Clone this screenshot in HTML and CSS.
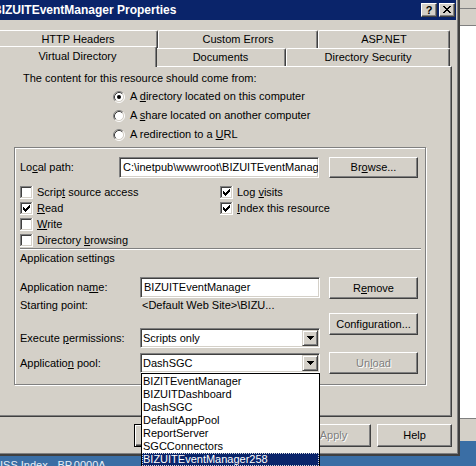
FILE: index.html
```html
<!DOCTYPE html>
<html>
<head>
<meta charset="utf-8">
<title>BIZUITEventManager Properties</title>
<link rel="stylesheet" href="styles.css">
</head>
<body>
<div class="screen">
  <div class="main">
    <div class="window">
      <div class="titlebar">
        <span class="title">BIZUITEventManager Properties</span>
        <span class="capbtn help">?</span>
        <span class="capbtn close">
          <svg width="8" height="7" viewBox="0 0 8 7" shape-rendering="crispEdges">
            <path d="M0 0h2v1H0zM6 0h2v1H6zM1 1h2v1H1zM5 1h2v1H5zM2 2h4v1H2zM3 3h2v1H3zM2 4h4v1H2zM1 5h2v1H1zM5 5h2v1H5zM0 6h2v1H0zM6 6h2v1H6z" fill="#000"/>
          </svg>
        </span>
      </div>
      <div class="sheet">
        <div class="tabrow back">
          <div class="tab t-http">HTTP Headers</div>
          <div class="tab t-custom">Custom Errors</div>
          <div class="tab t-asp">ASP.NET</div>
        </div>
        <div class="tabrow front">
          <div class="tab sel t-vdir">Virtual Directory</div>
          <div class="tab t-docs">Documents</div>
          <div class="tab t-dirsec">Directory Security</div>
        </div>
        <div class="panel">
          <div class="intro">The content for this resource should come from:</div>
          <div class="radios">
            <div class="radio-row">
              <svg class="radio" width="12" height="12" viewBox="0 0 12 12">
                <circle cx="6" cy="6" r="4.5" fill="#fff"/>
                <path d="M2.11 9.89A5.5 5.5 0 0 1 9.89 2.11" fill="none" stroke="#808080"/>
                <path d="M9.89 2.11A5.5 5.5 0 0 1 2.11 9.89" fill="none" stroke="#fff"/>
                <path d="M2.82 9.18A4.5 4.5 0 0 1 9.18 2.82" fill="none" stroke="#404040"/>
                <path d="M9.18 2.82A4.5 4.5 0 0 1 2.82 9.18" fill="none" stroke="#d4d0c8"/>
                <circle cx="6" cy="6" r="2" fill="#000"/>
              </svg>
              <span>A <u>d</u>irectory located on this computer</span>
            </div>
            <div class="radio-row">
              <svg class="radio" width="12" height="12" viewBox="0 0 12 12">
                <circle cx="6" cy="6" r="4.5" fill="#fff"/>
                <path d="M2.11 9.89A5.5 5.5 0 0 1 9.89 2.11" fill="none" stroke="#808080"/>
                <path d="M9.89 2.11A5.5 5.5 0 0 1 2.11 9.89" fill="none" stroke="#fff"/>
                <path d="M2.82 9.18A4.5 4.5 0 0 1 9.18 2.82" fill="none" stroke="#404040"/>
                <path d="M9.18 2.82A4.5 4.5 0 0 1 2.82 9.18" fill="none" stroke="#d4d0c8"/>
              </svg>
              <span>A <u>s</u>hare located on another computer</span>
            </div>
            <div class="radio-row">
              <svg class="radio" width="12" height="12" viewBox="0 0 12 12">
                <circle cx="6" cy="6" r="4.5" fill="#fff"/>
                <path d="M2.11 9.89A5.5 5.5 0 0 1 9.89 2.11" fill="none" stroke="#808080"/>
                <path d="M9.89 2.11A5.5 5.5 0 0 1 2.11 9.89" fill="none" stroke="#fff"/>
                <path d="M2.82 9.18A4.5 4.5 0 0 1 9.18 2.82" fill="none" stroke="#404040"/>
                <path d="M9.18 2.82A4.5 4.5 0 0 1 2.82 9.18" fill="none" stroke="#d4d0c8"/>
              </svg>
              <span>A redirection to a <u>U</u>RL</span>
            </div>
          </div>

          <div class="group">
            <div class="path-row">
              <span class="lbl-path">Lo<u>c</u>al path:</span>
              <div class="textbox tb-path">C:\inetpub\wwwroot\BIZUITEventManager</div>
              <div class="btn gbtn b-browse">Br<u>o</u>wse...</div>
            </div>

            <div class="checks">
              <div class="check-col left">
                <div class="check">
                  <svg class="cb" width="13" height="13" viewBox="0 0 13 13" shape-rendering="crispEdges"><rect width="13" height="13" fill="#fff"/><path d="M0 0h12v1H1v11H0z" fill="#808080"/><path d="M1 1h10v1H2v9H1z" fill="#404040"/><path d="M11 1h1v11H1v-1h10z" fill="#d4d0c8"/></svg>
                  <span>Scrip<u>t</u> source access</span>
                </div>
                <div class="check">
                  <svg class="cb" width="13" height="13" viewBox="0 0 13 13" shape-rendering="crispEdges"><rect width="13" height="13" fill="#fff"/><path d="M0 0h12v1H1v11H0z" fill="#808080"/><path d="M1 1h10v1H2v9H1z" fill="#404040"/><path d="M11 1h1v11H1v-1h10z" fill="#d4d0c8"/><path d="M3 5h1v3H3zM4 6h1v3H4zM5 7h1v3H5zM6 6h1v3H6zM7 5h1v3H7zM8 4h1v3H8zM9 3h1v3H9z" fill="#000"/></svg>
                  <span><u>R</u>ead</span>
                </div>
                <div class="check">
                  <svg class="cb" width="13" height="13" viewBox="0 0 13 13" shape-rendering="crispEdges"><rect width="13" height="13" fill="#fff"/><path d="M0 0h12v1H1v11H0z" fill="#808080"/><path d="M1 1h10v1H2v9H1z" fill="#404040"/><path d="M11 1h1v11H1v-1h10z" fill="#d4d0c8"/></svg>
                  <span><u>W</u>rite</span>
                </div>
                <div class="check">
                  <svg class="cb" width="13" height="13" viewBox="0 0 13 13" shape-rendering="crispEdges"><rect width="13" height="13" fill="#fff"/><path d="M0 0h12v1H1v11H0z" fill="#808080"/><path d="M1 1h10v1H2v9H1z" fill="#404040"/><path d="M11 1h1v11H1v-1h10z" fill="#d4d0c8"/></svg>
                  <span>Directory <u>b</u>rowsing</span>
                </div>
              </div>
              <div class="check-col right">
                <div class="check">
                  <svg class="cb" width="13" height="13" viewBox="0 0 13 13" shape-rendering="crispEdges"><rect width="13" height="13" fill="#fff"/><path d="M0 0h12v1H1v11H0z" fill="#808080"/><path d="M1 1h10v1H2v9H1z" fill="#404040"/><path d="M11 1h1v11H1v-1h10z" fill="#d4d0c8"/><path d="M3 5h1v3H3zM4 6h1v3H4zM5 7h1v3H5zM6 6h1v3H6zM7 5h1v3H7zM8 4h1v3H8zM9 3h1v3H9z" fill="#000"/></svg>
                  <span>Log <u>v</u>isits</span>
                </div>
                <div class="check">
                  <svg class="cb" width="13" height="13" viewBox="0 0 13 13" shape-rendering="crispEdges"><rect width="13" height="13" fill="#fff"/><path d="M0 0h12v1H1v11H0z" fill="#808080"/><path d="M1 1h10v1H2v9H1z" fill="#404040"/><path d="M11 1h1v11H1v-1h10z" fill="#d4d0c8"/><path d="M3 5h1v3H3zM4 6h1v3H4zM5 7h1v3H5zM6 6h1v3H6zM7 5h1v3H7zM8 4h1v3H8zM9 3h1v3H9z" fill="#000"/></svg>
                  <span><u>I</u>ndex this resource</span>
                </div>
              </div>
            </div>

            <div class="sep"></div>
            <div class="section">Application settings</div>

            <div class="app">
              <div class="app-left">
                <div class="field-row r-name">
                  <span class="lbl2">Application na<u>m</u>e:</span>
                  <div class="textbox tb-app">BIZUITEventManager</div>
                </div>
                <div class="field-row r-start">
                  <span class="lbl2">Starting point:</span>
                  <span class="value">&lt;Default Web Site&gt;\BIZU...</span>
                </div>
                <div class="field-row r-exec">
                  <span class="lbl2">Execute <u>p</u>ermissions:</span>
                  <div class="select">
                    <span class="sel-text">Scripts only</span>
                    <span class="arrow"><svg width="7" height="4" viewBox="0 0 7 4" shape-rendering="crispEdges"><path d="M0 0h7v1H0zM1 1h5v1H1zM2 2h3v1H2zM3 3h1v1H3z" fill="#000"/></svg></span>
                  </div>
                </div>
                <div class="field-row r-pool">
                  <span class="lbl2">Applicatio<u>n</u> pool:</span>
                  <div class="select">
                    <span class="sel-text">DashSGC</span>
                    <span class="arrow"><svg width="7" height="4" viewBox="0 0 7 4" shape-rendering="crispEdges"><path d="M0 0h7v1H0zM1 1h5v1H1zM2 2h3v1H2zM3 3h1v1H3z" fill="#000"/></svg></span>
                    <div class="droplist">
                      <div class="item">BIZITEventManager</div>
                      <div class="item">BIZUITDashboard</div>
                      <div class="item">DashSGC</div>
                      <div class="item">DefaultAppPool</div>
                      <div class="item">ReportServer</div>
                      <div class="item">SGCConnectors</div>
                      <div class="item hl">BIZUITEventManager258</div>
                    </div>
                  </div>
                </div>
              </div>
              <div class="app-right">
                <div class="btn gbtn b-remove">R<u>e</u>move</div>
                <div class="btn gbtn b-config">Confi<u>g</u>uration...</div>
                <div class="btn gbtn b-unload disabled">Un<u>l</u>oad</div>
              </div>
            </div>
          </div>
        </div>
        <div class="dlg-buttons">
          <div class="btn dbtn default">OK</div>
          <div class="btn dbtn">Cancel</div>
          <div class="btn dbtn disabled">Apply</div>
          <div class="btn dbtn">Help</div>
        </div>
      </div>
    </div>
    <div class="side">
      <div class="s-top"></div>
      <div class="s-line"></div>
      <div class="s-band"></div>
      <div class="s-line"></div>
      <div class="s-white"></div>
      <div class="s-line"></div>
      <div class="s-band2"></div>
      <div class="s-blue"></div>
    </div>
  </div>
  <div class="bottom"><span class="bottom-text">ISS.Index - BP.0000A</span></div>
</div>
</body>
</html>
```

FILE: styles.css
```css
* { box-sizing: border-box; }

html, body {
  margin: 0;
  padding: 0;
}

body {
  width: 476px;
  height: 466px;
  overflow: hidden;
  font-family: "Liberation Sans", Arial, sans-serif;
  font-size: 11px;
  line-height: 13px;
  color: #000;
  background: #d4d0c8;
}

u { text-decoration: underline; text-underline-offset: 1px; }

.screen {
  width: 476px;
  height: 466px;
  overflow: hidden;
  display: flex;
  flex-direction: column;
}

.main {
  display: flex;
  height: 456px;
  flex: none;
}

/* ---------- window ---------- */
.window {
  flex: none;
  width: 472px;
  height: 460px;
  margin: -4px 0 0 -12px;
  background: #d4d0c8;
  border: 2px solid;
  border-color: #d4d0c8 #404040 #404040 #d4d0c8;
  box-shadow: inset 1px 1px #fff, inset -1px -1px #808080;
  padding: 2px;
  display: flex;
  flex-direction: column;
}

.titlebar {
  flex: none;
  height: 20px;
  background: #0a246a;
  color: #fff;
  display: flex;
  align-items: flex-start;
  padding: 3px 1px 0 1px;
}

.title {
  flex: 1;
  font-weight: bold;
  font-size: 12px;
  line-height: 14px;
  white-space: nowrap;
  overflow: hidden;
}

.capbtn {
  flex: none;
  width: 16px;
  height: 14px;
  background: #d4d0c8;
  color: #000;
  border: 1px solid;
  border-color: #fff #404040 #404040 #fff;
  box-shadow: inset -1px -1px #808080;
  display: flex;
  align-items: center;
  justify-content: center;
  font-weight: bold;
  font-size: 11px;
  line-height: 11px;
}

.help { margin-right: 2px; }
.close svg { display: block; margin-top: -1px; }

/* ---------- property sheet ---------- */
.sheet {
  margin: 10px 4px 0 6px;
  display: flex;
  flex-direction: column;
}

.tabrow {
  display: flex;
  height: 18px;
  flex: none;
}

.tabrow.front { padding-left: 2px; }

.tab {
  flex: none;
  height: 18px;
  background: #d4d0c8;
  border-top: 1px solid #fff;
  border-left: 1px solid #fff;
  border-right: 1px solid #404040;
  box-shadow: inset -1px 0 #808080;
  border-radius: 2px 2px 0 0;
  text-align: center;
  line-height: 17px;
  white-space: nowrap;
}

.t-http { width: 160px; }
.t-custom { width: 160px; }
.t-asp { width: 132px; }
.t-vdir { width: 159px; }
.t-docs { width: 131px; }
.t-dirsec { width: 164px; }

.tab.sel {
  height: 21px;
  margin: -2px -2px -1px -2px;
  padding-top: 1px;
  position: relative;
  z-index: 1;
}

.panel {
  flex: none;
  height: 351px;
  border: 1px solid;
  border-color: #fff #404040 #404040 #fff;
  box-shadow: inset -1px -1px #808080;
}

.intro {
  padding: 5px 0 0 24px;
  height: 18px;
  white-space: nowrap;
}

.radios {
  margin: 2px 0 0 114px;
}

.radio-row {
  height: 19px;
  display: flex;
  align-items: center;
  white-space: nowrap;
}

.radio {
  flex: none;
  display: block;
  margin-right: 5px;
}

/* ---------- group box ---------- */
.group {
  margin: 3px 0 0 15px;
  width: 412px;
  height: 238px;
  border: 1px solid #808080;
  box-shadow: inset 1px 1px #fff, 1px 1px #fff;
  padding: 9px 4px 0 5px;
}

.path-row {
  display: flex;
  align-items: center;
  height: 21px;
}

.lbl-path {
  flex: none;
  width: 99px;
  white-space: nowrap;
}

.textbox {
  flex: none;
  height: 21px;
  background: #fff;
  border: 1px solid;
  border-color: #808080 #fff #fff #808080;
  box-shadow: inset 1px 1px #404040, inset -1px -1px #d4d0c8;
  padding: 0 3px;
  line-height: 19px;
  white-space: nowrap;
  overflow: hidden;
}

.tb-path { width: 200px; }
.tb-app { width: 180px; }

.btn {
  flex: none;
  display: flex;
  align-items: center;
  justify-content: center;
  background: #d4d0c8;
  border: 1px solid;
  border-color: #fff #404040 #404040 #fff;
  box-shadow: inset -1px -1px #808080;
  white-space: nowrap;
}

.btn.disabled {
  color: #808080;
  text-shadow: 1px 1px 0 #fff;
}

.gbtn {
  width: 89px;
  height: 22px;
}

.b-browse { margin-left: 10px; height: 21px; }

.checks {
  display: flex;
  margin-top: 6px;
}

.check-col.left { width: 200px; }

.check {
  height: 16px;
  display: flex;
  align-items: center;
  white-space: nowrap;
}

.cb {
  flex: none;
  display: block;
  margin-right: 4px;
}

.sep {
  height: 2px;
  border-top: 1px solid #808080;
  border-bottom: 1px solid #fff;
}

.section {
  margin-top: 2px;
  white-space: nowrap;
}

.app {
  display: flex;
  margin-top: 12px;
}

.app-left {
  width: 300px;
  flex: none;
}

.app-right {
  margin-left: 9px;
  display: flex;
  flex-direction: column;
}

.field-row {
  display: flex;
  align-items: center;
}

.lbl2 {
  flex: none;
  width: 120px;
  white-space: nowrap;
}

.r-name { height: 21px; }
.r-start { height: 13px; margin-top: 1px; }
.r-exec { height: 20px; margin-top: 16px; }
.r-pool { height: 20px; margin-top: 5px; }

.value {
  padding-left: 2px;
  white-space: nowrap;
}

.b-config { margin-top: 14px; }
.b-unload { margin-top: 17px; }

.select {
  flex: none;
  position: relative;
  width: 180px;
  height: 20px;
  background: #fff;
  border: 1px solid;
  border-color: #808080 #fff #fff #808080;
  box-shadow: inset 1px 1px #404040, inset -1px -1px #d4d0c8;
  display: flex;
  align-items: center;
  padding-left: 2px;
}

.sel-text {
  flex: 1;
  white-space: nowrap;
  overflow: hidden;
}

.arrow {
  flex: none;
  width: 16px;
  height: 16px;
  margin-right: 1px;
  background: #d4d0c8;
  border: 1px solid;
  border-color: #d4d0c8 #404040 #404040 #d4d0c8;
  box-shadow: inset 1px 1px #fff, inset -1px -1px #808080;
  display: flex;
  align-items: center;
  justify-content: center;
}

.arrow svg { display: block; }

.droplist {
  position: absolute;
  top: 19px;
  left: 0;
  width: 179px;
  background: #fff;
  border: 1px solid #000;
  padding-top: 1px;
  z-index: 5;
}

.item {
  height: 13px;
  line-height: 13px;
  padding-left: 1px;
  white-space: nowrap;
}

.item.hl {
  background: #0a246a;
  color: #fff;
  border: 1px dotted #d8d8d8;
  padding-left: 0;
  line-height: 11px;
}

/* ---------- dialog buttons ---------- */
.dlg-buttons {
  display: flex;
  justify-content: flex-end;
  gap: 6px;
  margin-top: 7px;
}

.dbtn {
  width: 75px;
  height: 23px;
}

.dbtn.default {
  border-color: #000;
  box-shadow: inset 1px 1px #fff, inset -1px -1px #404040, inset -2px -2px #808080;
}

/* ---------- background windows ---------- */
.side {
  flex: 1;
  display: flex;
  flex-direction: column;
}

.s-top { height: 8px; background: #d4d0c8; }
.s-line { height: 1px; background: #808080; }
.s-band { height: 16px; background: #d4d0c8; }
.s-white { flex: 1; background: #fff; }
.s-band2 { height: 22px; background: #d4d0c8; }
.s-blue { height: 15px; background: #3a6ea5; }

.bottom {
  flex: none;
  height: 10px;
  background: #3a6ea5;
  color: #e8eef6;
  padding-top: 3px;
  overflow: hidden;
  white-space: nowrap;
}

.bottom-text {
  display: block;
  line-height: 13px;
}
```
